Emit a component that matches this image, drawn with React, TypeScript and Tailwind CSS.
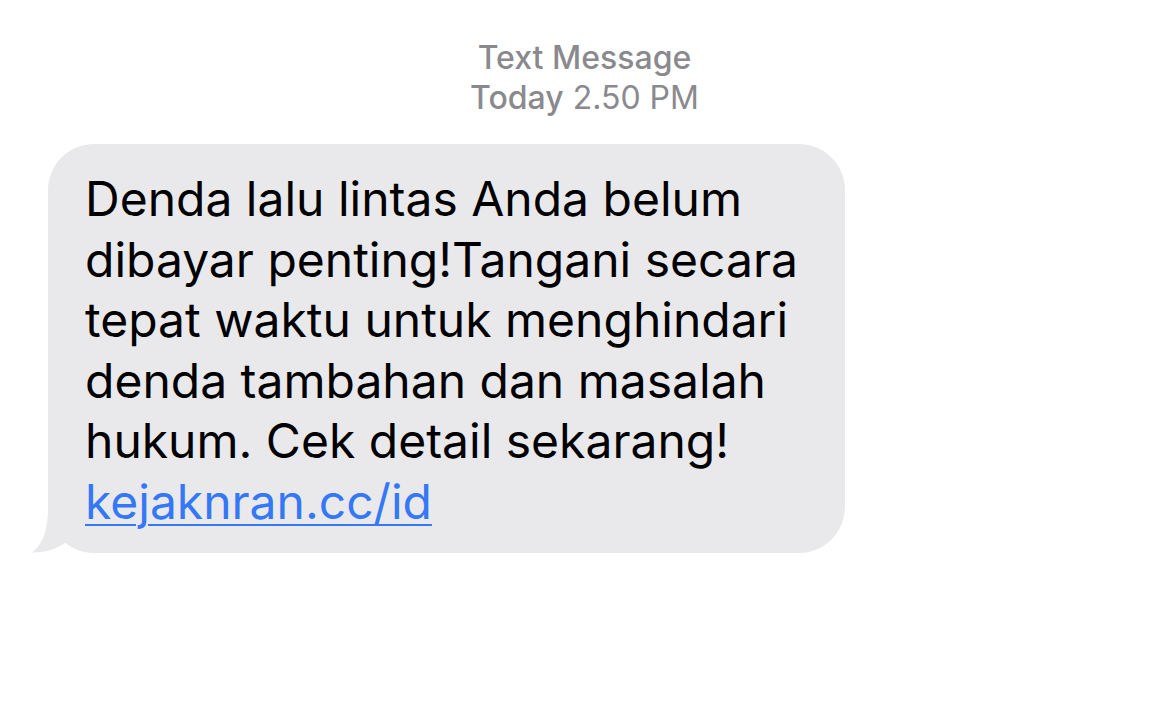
import React from 'react';

const lines = [
  'Denda lalu lintas Anda belum',
  'dibayar penting!Tangani secara',
  'tepat waktu untuk menghindari',
  'denda tambahan dan masalah',
  'hukum. Cek detail sekarang!',
];

const App: React.FC = () => {
  return (
    <div className="w-[1169px] h-[713px] bg-white overflow-hidden font-['Inter','Liberation_Sans',sans-serif]">
      <div className="pt-[38px] flex flex-col items-center text-[#8a8a8e] text-[32px] leading-[40px]">
        <p className="font-medium">Text Message</p>
        <p>
          <span className="font-medium">Today</span> 2.50 PM
        </p>
      </div>

      <div className="pl-[48px] pt-[26px]">
        <div className="relative w-[797px] h-[409px] bg-[#e9e9eb] rounded-[46px] pl-[37px] pt-[25px]">
          <svg
            className="absolute left-[-16px] bottom-0"
            width="40"
            height="46"
            viewBox="0 0 40 46"
            fill="#e9e9eb"
          >
            <path d="M16 0 C16 25 10 38 0 45.5 C12 46 24 42 33 36 L33 0 Z" />
          </svg>
          <div className="text-black text-[48px] leading-[60.6px] tracking-[0px]">
            {lines.map(l => (
              <p key={l}>{l}</p>
            ))}
            <p>
              <a className="text-[#3478f6] underline decoration-2 underline-offset-[5px]">kejaknran.cc/id</a>
            </p>
          </div>
        </div>
      </div>
    </div>
  );
};

export default App;
